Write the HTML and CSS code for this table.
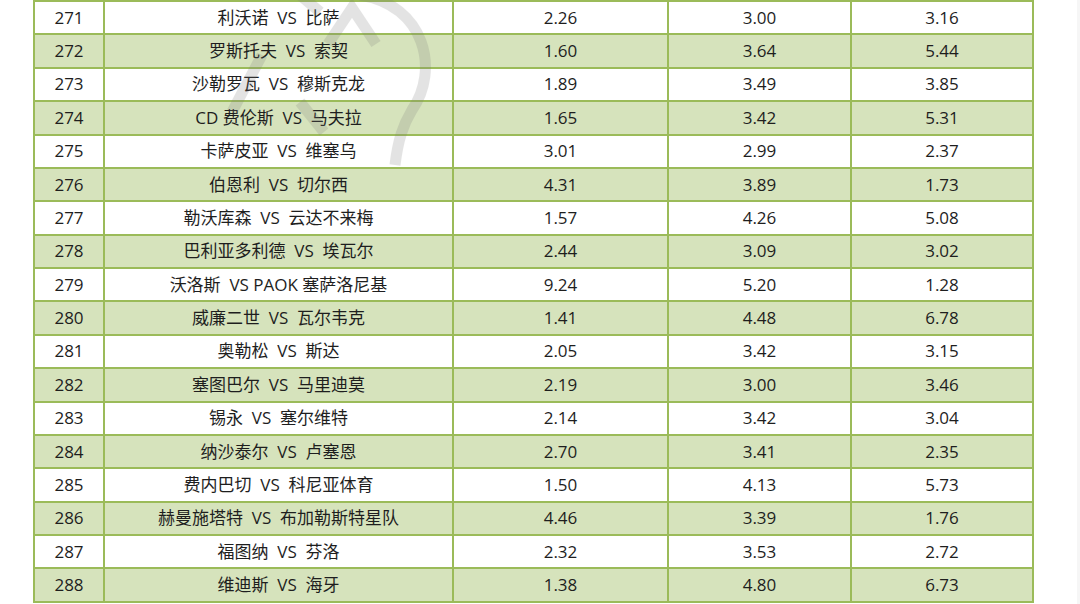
FILE: index.html
```html
<!DOCTYPE html>
<html lang="zh">
<head>
<meta charset="utf-8">
<link rel="stylesheet" href="styles.css">
</head>
<body>
<div class="page">
<table class="odds">
<colgroup>
<col class="c-no"><col class="c-match"><col class="c-a"><col class="c-b"><col class="c-c">
</colgroup>
<tbody>
<tr><td>271</td><td class="m">利沃诺  VS  比萨</td><td>2.26</td><td>3.00</td><td>3.16</td></tr>
<tr><td>272</td><td class="m">罗斯托夫  VS  索契</td><td>1.60</td><td>3.64</td><td>5.44</td></tr>
<tr><td>273</td><td class="m">沙勒罗瓦  VS  穆斯克龙</td><td>1.89</td><td>3.49</td><td>3.85</td></tr>
<tr><td>274</td><td class="m">CD 费伦斯  VS  马夫拉</td><td>1.65</td><td>3.42</td><td>5.31</td></tr>
<tr><td>275</td><td class="m">卡萨皮亚  VS  维塞乌</td><td>3.01</td><td>2.99</td><td>2.37</td></tr>
<tr><td>276</td><td class="m">伯恩利  VS  切尔西</td><td>4.31</td><td>3.89</td><td>1.73</td></tr>
<tr><td>277</td><td class="m">勒沃库森  VS  云达不来梅</td><td>1.57</td><td>4.26</td><td>5.08</td></tr>
<tr><td>278</td><td class="m">巴利亚多利德  VS  埃瓦尔</td><td>2.44</td><td>3.09</td><td>3.02</td></tr>
<tr><td>279</td><td class="m">沃洛斯  VS PAOK 塞萨洛尼基</td><td>9.24</td><td>5.20</td><td>1.28</td></tr>
<tr><td>280</td><td class="m">威廉二世  VS  瓦尔韦克</td><td>1.41</td><td>4.48</td><td>6.78</td></tr>
<tr><td>281</td><td class="m">奥勒松  VS  斯达</td><td>2.05</td><td>3.42</td><td>3.15</td></tr>
<tr><td>282</td><td class="m">塞图巴尔  VS  马里迪莫</td><td>2.19</td><td>3.00</td><td>3.46</td></tr>
<tr><td>283</td><td class="m">锡永  VS  塞尔维特</td><td>2.14</td><td>3.42</td><td>3.04</td></tr>
<tr><td>284</td><td class="m">纳沙泰尔  VS  卢塞恩</td><td>2.70</td><td>3.41</td><td>2.35</td></tr>
<tr><td>285</td><td class="m">费内巴切  VS  科尼亚体育</td><td>1.50</td><td>4.13</td><td>5.73</td></tr>
<tr><td>286</td><td class="m">赫曼施塔特  VS  布加勒斯特星队</td><td>4.46</td><td>3.39</td><td>1.76</td></tr>
<tr><td>287</td><td class="m">福图纳  VS  芬洛</td><td>2.32</td><td>3.53</td><td>2.72</td></tr>
<tr><td>288</td><td class="m">维迪斯  VS  海牙</td><td>1.38</td><td>4.80</td><td>6.73</td></tr>
</tbody>
</table>
<svg class="watermark" width="300" height="200" viewBox="0 0 300 200">
  <g fill="none" stroke="#7a7a7a" stroke-width="11" stroke-linecap="butt" stroke-linejoin="miter">
    <path d="M62 55 L32 112"/>
    <path d="M128 44 L152 8 L176 44"/>
    <path d="M160 -5 C 225 5, 240 70, 212 110 C 203 125, 198 140, 195 165"/>
    <path d="M100 -5 L120 12"/>
    <path d="M100 102 L124 132"/>
  </g>
</svg>
<div class="edge"></div>
</div>
</body>
</html>
```
FILE: styles.css
```css
html, body {
  margin: 0;
  padding: 0;
  background: #ffffff;
}
.page {
  position: relative;
  width: 1080px;
  height: 604px;
  overflow: hidden;
}
.odds {
  margin-left: 33px;
  margin-top: 0;
  border-collapse: collapse;
  table-layout: fixed;
  width: 1001px;
  font-family: "Open Sans", "Noto Sans CJK SC", sans-serif;
  font-size: 17px;
  color: #1e1e1e;
}
.c-no { width: 70px; }
.c-match { width: 349px; }
.c-a { width: 215px; }
.c-b { width: 183px; }
.c-c { width: 182px; }
.odds tr { height: 33.375px; }
.odds tr:nth-child(even) td { background: #d6e3bc; }
.odds td {
  border: 2px solid #9bbb59;
  padding: 0;
  text-align: center;
  vertical-align: middle;
  line-height: 20px;
  white-space: pre;
}
.watermark {
  position: absolute;
  left: 200px;
  top: 0;
  opacity: 0.2;
  pointer-events: none;
}
.edge {
  position: absolute;
  right: 0;
  top: 0;
  width: 3px;
  height: 604px;
  background: #f6f6f6;
}
```
